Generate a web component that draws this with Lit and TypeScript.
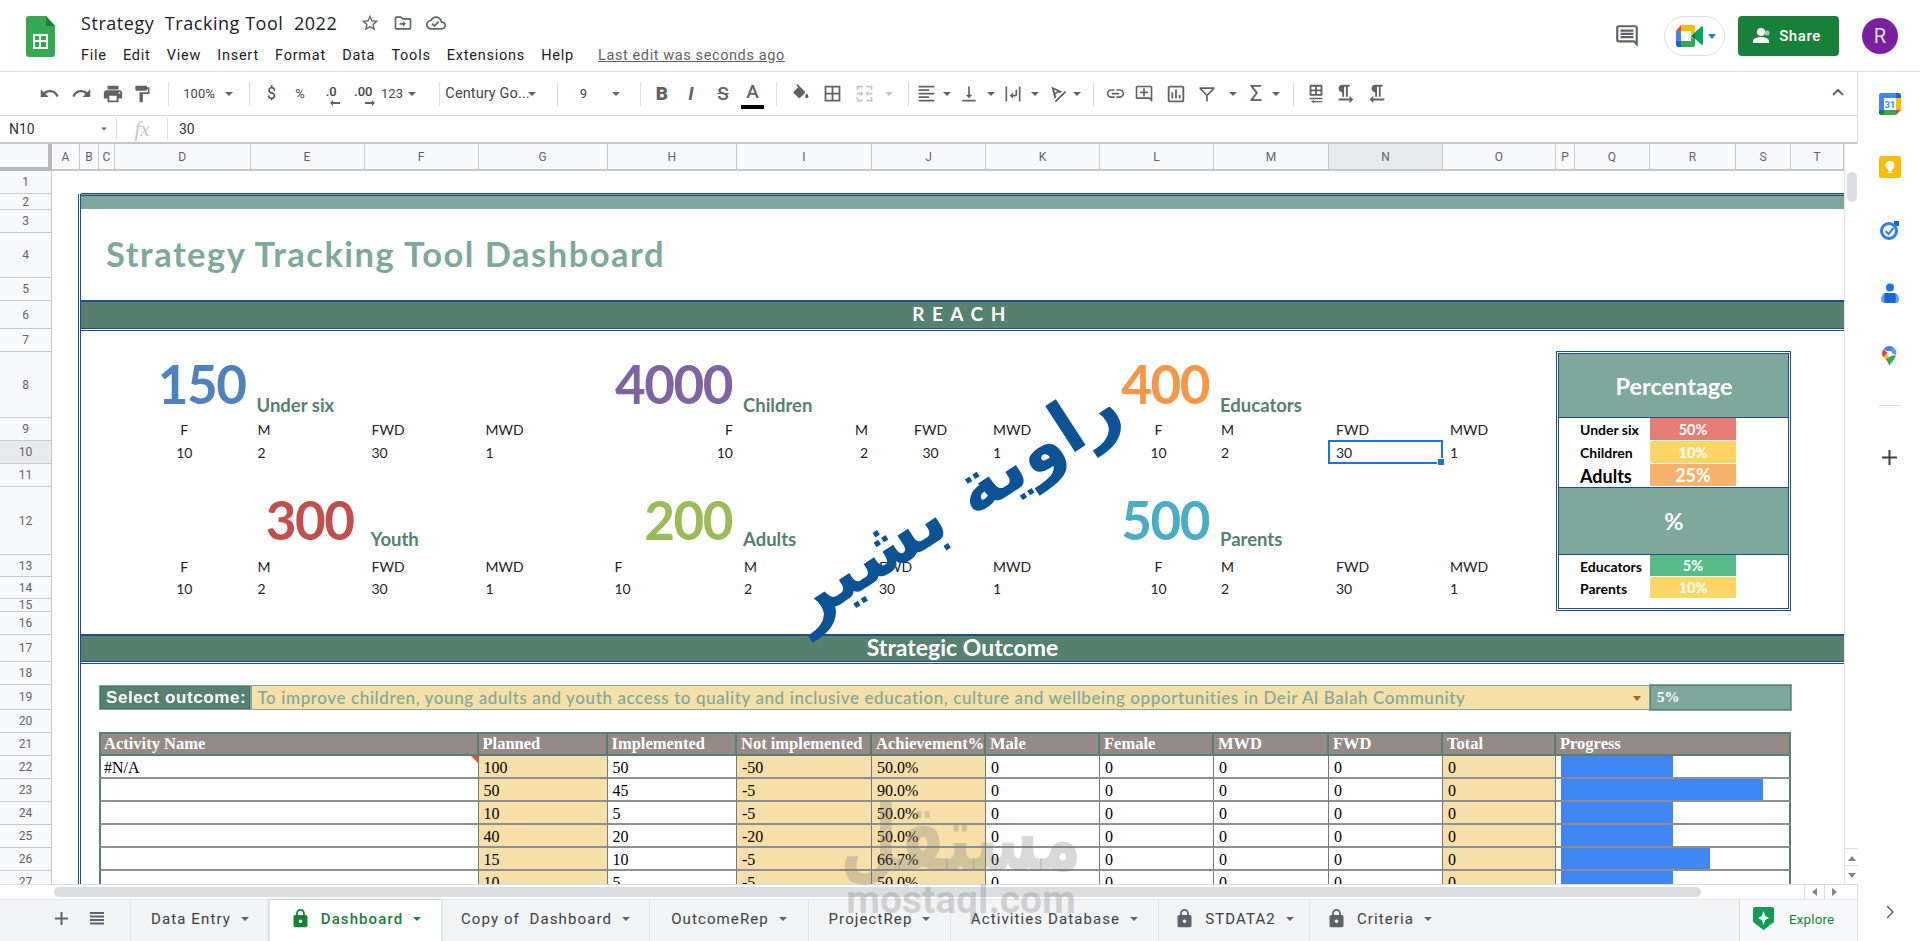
import {LitElement, css, html} from 'lit';
import {customElement} from 'lit/decorators.js';

const COLS = 'ABCDEFGHIJKLMNOPQRST';
const COL_EDGES = [52, 80, 99, 115, 250.5, 364.5, 478.5, 607.5, 737, 872, 986, 1100, 1214, 1329, 1443, 1556, 1575, 1650, 1736, 1791, 1844];
const ROW_HEIGHTS = [23, 16, 23, 45, 23, 28, 23, 66, 23, 23, 23, 68, 22, 22, 13, 23, 27, 23, 25, 23, 23, 23, 23, 23, 23, 23, 23];

const columnTemplate = COL_EDGES.slice(1).map((edge, i) => `${edge - COL_EDGES[i]}px`).join(' ');
const rowTemplate = ROW_HEIGHTS.map((h) => `${h}px`).join(' ');

// grid-area for a cell range, in sheet terms (at('B', 2, 'T'))
function at(col: string, row: number, colEnd = col, rowEnd = row) {
  const c1 = COLS.indexOf(col) + 2;
  const c2 = COLS.indexOf(colEnd) + 3;
  return `grid-area:${row + 1}/${c1}/${rowEnd + 2}/${c2}`;
}

const icon = (d: string, size = 18, cls = '') =>
  html`<svg class="ic ${cls}" width=${size} height=${size} viewBox="0 0 24 24"><path d=${d}></path></svg>`;

const caret = html`<svg class="caret" width="8" height="4" viewBox="0 0 8 4"><path d="M0 0h8L4 4z"></path></svg>`;
const sep = html`<span class="tsep"></span>`;

const P = {
  undo: 'M12.5 8c-2.65 0-5.05.99-6.9 2.6L2 7v9h9l-3.62-3.62c1.39-1.16 3.16-1.88 5.12-1.88 3.54 0 6.55 2.31 7.6 5.5l2.37-.78C21.08 11.03 17.15 8 12.5 8z',
  redo: 'M18.4 10.6C16.55 8.99 14.15 8 11.5 8c-4.65 0-8.58 3.03-9.96 7.22L3.9 16c1.05-3.19 4.05-5.5 7.6-5.5 1.95 0 3.73.72 5.12 1.88L13 16h9V7l-3.6 3.6z',
  print: 'M19 8H5c-1.66 0-3 1.34-3 3v6h4v4h12v-4h4v-6c0-1.66-1.34-3-3-3zm-3 11H8v-5h8v5zm3-7c-.55 0-1-.45-1-1s.45-1 1-1 1 .45 1 1-.45 1-1 1zm-1-9H6v4h12V3z',
  paint: 'M18 4V3c0-.55-.45-1-1-1H5c-.55 0-1 .45-1 1v4c0 .55.45 1 1 1h12c.55 0 1-.45 1-1V6h1v4H9v11c0 .55.45 1 1 1h2c.55 0 1-.45 1-1v-9h8V4h-3z',
  fill: 'M16.56 8.94L7.62 0 6.21 1.41l2.38 2.38-5.15 5.15c-.59.59-.59 1.54 0 2.12l5.5 5.5c.29.29.68.44 1.06.44s.77-.15 1.06-.44l5.5-5.5c.59-.58.59-1.53 0-2.12zM19 11.5s-2 2.17-2 3.5c0 1.1.9 2 2 2s2-.9 2-2c0-1.33-2-3.5-2-3.5z',
  borders: 'M3 3v18h18V3H3zm8 16H5v-6h6v6zm0-8H5V5h6v6zm8 8h-6v-6h6v6zm0-8h-6V5h6v6z',
  merge: 'M3 3h7v2H5v3H3zM14 3h7v5h-2V5h-5zM3 16h2v3h5v2H3zM19 16h2v5h-7v-2h5zM3 11h5v2H3zM16 11h5v2h-5zM8 9l3 3-3 3zM16 9l-3 3 3 3z',
  align: 'M15 15H3v2h12v-2zm0-8H3v2h12V7zM3 13h18v-2H3v2zm0 8h18v-2H3v2zM3 3v2h18V3H3z',
  valign: 'M16 13h-3V3h-2v10H8l4 4 4-4zM4 19v2h16v-2H4z',
  wrap: 'M3 3h2v18H3zM19 3h2v18h-2zM15 7h2v6c0 1.1-.9 2-2 2h-3v2.5L8 14l4-3.500V13h3z',
  rotate: 'M4 3l13 6-3 2-1-1-4 2.600 1 3.400-2 2zM7.300 6.500l1.300 4.100 2.800-1.800zM20.300 8.500L21.800 10 9.500 22 8 20.500z',
  link: 'M3.9 12c0-1.71 1.39-3.1 3.1-3.1h4V7H7c-2.76 0-5 2.24-5 5s2.24 5 5 5h4v-1.9H7c-1.71 0-3.1-1.39-3.1-3.1zM8 13h8v-2H8v2zm9-6h-4v1.9h4c1.71 0 3.1 1.39 3.1 3.1s-1.39 3.1-3.1 3.1h-4V17h4c2.76 0 5-2.24 5-5s-2.24-5-5-5z',
  addComment: 'M22 4c0-1.1-.9-2-2-2H4c-1.1 0-2 .9-2 2v12c0 1.1.9 2 2 2h14l4 4V4zm-2 13.170L18.830 16H4V4h16v13.170zM13 5h-2v4H7v2h4v4h2v-4h4V9h-4z',
  chart: 'M19 3H5c-1.1 0-2 .9-2 2v14c0 1.1.9 2 2 2h14c1.1 0 2-.9 2-2V5c0-1.1-.9-2-2-2zm0 16H5V5h14v14zM7 10h2v7H7zm4-3h2v10h-2zm4 6h2v4h-2z',
  filter: 'M3 4h18v2l-8 8v7h-2v-7L3 6zm2.800 2l6.200 6.200L18.200 6z',
  freeze: 'M5 2h14v12H5zm2 2v3h4V4zm6 0v3h4V4zM7 9v3h4V9zm6 0v3h4V9zM5 16h14v1.600H5zM10 18.500L6.500 20.300 10 22v-1h9v-1.400h-9z',
  ltr: 'M9 10v5h2V4h2v11h2V4h2V2H9C6.790 2 5 3.790 5 6s1.790 4 4 4zm12 8l-4-4v3H5v2h12v3l4-4z',
  rtl: 'M10 10v5h2V4h2v11h2V4h2V2h-8C7.790 2 6 3.790 6 6s1.790 4 4 4zm-2 7v-3l-4 4 4 4v-3h12v-2H8z',
  star: 'M22 9.240l-7.190-.620L12 2 9.190 8.630 2 9.240l5.460 4.730L5.820 21 12 17.270 18.180 21l-1.630-7.030L22 9.240zM12 15.400l-3.760 2.270 1-4.280-3.320-2.880 4.380-.380L12 6.100l1.710 4.040 4.380.380-3.320 2.880 1 4.280L12 15.400z',
  move: 'M20 6h-8l-2-2H4c-1.100 0-2 .9-2 2v12c0 1.100.9 2 2 2h16c1.100 0 2-.9 2-2V8c0-1.100-.9-2-2-2zm0 12H4V6h5.170l2 2H20v10zM12 9.500V12H8v2h4v2.500l3.500-3.500z',
  cloud: 'M19.350 10.040C18.670 6.590 15.640 4 12 4 9.110 4 6.600 5.640 5.350 8.040 2.340 8.360 0 10.910 0 14c0 3.310 2.690 6 6 6h13c2.760 0 5-2.240 5-5 0-2.640-2.050-4.780-4.650-4.960zM19 18H6c-2.210 0-4-1.790-4-4 0-2.050 1.530-3.760 3.560-3.970l1.070-.110.5-.950C8.080 7.140 9.940 6 12 6c2.620 0 4.880 1.860 5.390 4.430l.3 1.500 1.530.110c1.560.1 2.780 1.410 2.780 2.960 0 1.650-1.350 3-3 3zm-9-3.820l-2.090-2.090L6.500 13.500 10 17l6.010-6.010-1.410-1.410z',
  comments: 'M21.990 4c0-1.100-.89-2-1.990-2H4c-1.100 0-2 .9-2 2v12c0 1.100.9 2 2 2h14l4 4-.01-18zM20 4v13.170L18.830 16H4V4h16zM6 12h12v2H6zm0-3h12v2H6zm0-3h12v2H6z',
  lock: 'M18 8h-1V6c0-2.760-2.240-5-5-5S7 3.240 7 6v2H6c-1.100 0-2 .9-2 2v10c0 1.100.9 2 2 2h12c1.100 0 2-.9 2-2V10c0-1.100-.9-2-2-2zm-6 9c-1.100 0-2-.9-2-2s.9-2 2-2 2 .9 2 2-.9 2-2 2zM9 8V6c0-1.660 1.340-3 3-3s3 1.340 3 3v2H9z',
};

// center x of each toolbar item, measured from the page's left edge
const TOOLS: [number, unknown][] = [
  [49, icon(P.undo, 21)],
  [81, icon(P.redo, 21)],
  [113, icon(P.print, 22)],
  [145, icon(P.paint, 20)],
  [164, sep],
  [199, html`<span class="ttxt">100%</span>`],
  [234, caret],
  [248, sep],
  [269, html`<span class="ttxt big">$</span>`],
  [300, html`<span class="ttxt">%</span>`],
  [331, html`<span class="dec">.0<svg width="10" height="6" viewBox="0 0 10 6"><path d="M3 0v2h7v2H3v2L0 3z"></path></svg></span>`],
  [363, html`<span class="dec">.00<svg width="10" height="6" viewBox="0 0 10 6"><path d="M7 0v2H0v2h7v2l3-3z"></path></svg></span>`],
  [396, html`<span class="ttxt">123</span>`],
  [413, caret],
  [427, sep],
  [491, html`<span class="ttxt wide">Century Go...</span>`],
  [541, caret],
  [556, sep],
  [577, html`<span class="ttxt">9</span>`],
  [624, caret],
  [639, sep],
  [659, html`<span class="fmt b">B</span>`],
  [691, html`<span class="fmt i">I</span>`],
  [723, html`<span class="fmt s">S</span>`],
  [755, html`<span class="fmt a">A<span class="abar"></span></span>`],
  [777, sep],
  [798, icon(P.fill, 20)],
  [832, icon(P.borders, 21)],
  [867, icon(P.merge, 21, 'off')],
  [891, html`<svg class="caret off" width="8" height="4" viewBox="0 0 8 4"><path d="M0 0h8L4 4z"></path></svg>`],
  [907, sep],
  [927, icon(P.align, 21)],
  [945, caret],
  [970, icon(P.valign, 20)],
  [989, caret],
  [1015, icon(P.wrap, 20)],
  [1033, caret],
  [1060, icon(P.rotate, 20)],
  [1077, caret],
  [1092, sep],
  [1113, icon(P.link, 21)],
  [1144, icon(P.addComment, 20)],
  [1176, icon(P.chart, 22)],
  [1209, icon(P.filter, 20)],
  [1233, caret],
  [1257, html`<span class="fmt sum">Σ</span>`],
  [1277, caret],
  [1292, sep],
  [1313, icon(P.freeze, 22)],
  [1345, icon(P.ltr, 22)],
  [1377, icon(P.rtl, 22)],
];

const MENU = ['File', 'Edit', 'View', 'Insert', 'Format', 'Data', 'Tools', 'Extensions', 'Help'];

const TABS = [
  {label: 'Data Entry', w: 139},
  {label: 'Dashboard', w: 172, active: true, lock: true},
  {label: 'Copy of  Dashboard', w: 208},
  {label: 'OutcomeRep', w: 159},
  {label: 'ProjectRep', w: 142},
  {label: 'Activities Database', w: 208},
  {label: 'STDATA2', w: 151, lock: true},
  {label: 'Criteria', w: 139, lock: true},
];

const STATS = [
  {num: '150', color: '#4f81bd', label: 'Under six', numCol: 'D', labelCol: 'E', row: 8},
  {num: '4000', color: '#8064a2', label: 'Children', numCol: 'H', labelCol: 'I', row: 8},
  {num: '400', color: '#f79646', label: 'Educators', numCol: 'L', labelCol: 'M', row: 8},
  {num: '300', color: '#c0504d', label: 'Youth', numCol: 'E', labelCol: 'F', row: 12, inset: true},
  {num: '200', color: '#9bbb59', label: 'Adults', numCol: 'H', labelCol: 'I', row: 12},
  {num: '500', color: '#4bacc6', label: 'Parents', numCol: 'L', labelCol: 'M', row: 12},
];

// [column, alignment] for the F / M / FWD / MWD figures of each block
const BLOCKS_TOP = [['D', 'c'], ['E', 'l'], ['F', 'l'], ['G', 'l'], ['H', 'r'], ['I', 'r'], ['J', 'c'], ['K', 'l'], ['L', 'c'], ['M', 'l'], ['N', 'l'], ['O', 'l']];
const BLOCKS_BOTTOM = [['D', 'c'], ['E', 'l'], ['F', 'l'], ['G', 'l'], ['H', 'l'], ['I', 'l'], ['J', 'l'], ['K', 'l'], ['L', 'c'], ['M', 'l'], ['N', 'l'], ['O', 'l']];
const HEADS = ['F', 'M', 'FWD', 'MWD'];
const VALUES = ['10', '2', '30', '1'];

const PCT = [
  {label: 'Under six', value: '50%', color: '#e67c73', row: 9},
  {label: 'Children', value: '10%', color: '#ffd666', row: 10},
  {label: 'Adults', value: '25%', color: '#f6b26b', row: 11, big: true},
  {label: 'Educators', value: '5%', color: '#57bb8a', row: 13},
  {label: 'Parents', value: '10%', color: '#ffd666', row: 14},
];

const TABLE_HEAD: [string, string, string][] = [
  ['Activity Name', 'C', 'F'], ['Planned', 'G', 'G'], ['Implemented', 'H', 'H'], ['Not implemented', 'I', 'I'],
  ['Achievement%', 'J', 'J'], ['Male', 'K', 'K'], ['Female', 'L', 'L'], ['MWD', 'M', 'M'], ['FWD', 'N', 'N'],
  ['Total', 'O', 'O'], ['Progress', 'P', 'S'],
];

const ACTIVITIES = [
  {name: '#N/A', planned: 100, done: 50, gap: -50, pct: 50},
  {name: '', planned: 50, done: 45, gap: -5, pct: 90},
  {name: '', planned: 10, done: 5, gap: -5, pct: 50},
  {name: '', planned: 40, done: 20, gap: -20, pct: 50},
  {name: '', planned: 15, done: 10, gap: -5, pct: 66.7},
  {name: '', planned: 10, done: 5, gap: -5, pct: 50},
];

@customElement('app-root')
export class AppRoot extends LitElement {
  static styles = css`
    :host {
      display: block;
      position: relative;
      width: 1920px;
      height: 941px;
      overflow: hidden;
      background: #fff;
      color: #202124;
      font-family: Roboto, 'Liberation Sans', sans-serif;
      --band: #7ea89b;
      --band-dark: #56806f;
      --navy: #1f4e85;
      --tan: #f6dfa8;
      --cg: Lato, 'Noto Sans', sans-serif;
    }
    svg { display: block; flex: none; }
    .ic path { fill: #5f6368; }
    .ic.off path { fill: #c4c7ca; }
    .caret path { fill: #5f6368; }
    .caret.off path { fill: #c4c7ca; }

    /* title bar */
    .top {
      height: 72px;
      box-sizing: border-box;
      display: flex;
      padding: 16px 0 0 26px;
      border-bottom: 1px solid #dadce0;
    }
    .docs { margin-left: 26px; margin-top: -5px; }
    .title-row { display: flex; align-items: center; height: 24px; }
    .doc-title { font-size: 18px; letter-spacing: .55px; white-space: pre; width: 257px; font-family: 'Open Sans', Roboto, sans-serif; }
    .title-icons { display: flex; gap: 13px; margin-left: 22px; }
    .menu { display: flex; align-items: center; height: 22px; margin-top: 9px; font-size: 14.500px; letter-spacing: .75px; }
    .menu span { margin-right: 16.200px; }
    .menu .last { margin-left: 8px; margin-right: 0; color: #5f6368; text-decoration: underline; letter-spacing: .6px; }
    .top-right { margin-left: auto; display: flex; align-items: flex-start; padding-right: 22px; }
    .comments { margin: 7px 24px 0 0; }
    .meet {
      width: 61px; height: 40px; box-sizing: border-box;
      border: 1px solid #dadce0; border-radius: 20px;
      display: flex; align-items: center; padding-left: 11px; gap: 5px;
    }
    .share {
      margin-left: 13px; width: 101px; height: 40px; padding-right: 3px; box-sizing: border-box;
      background: #188038; color: #fff; border-radius: 4px;
      display: flex; align-items: center; justify-content: center; gap: 6px;
      font-size: 15px; font-weight: 500; letter-spacing: .6px;
    }
    .avatar {
      margin: 2px 0 0 23px; width: 36px; height: 36px; border-radius: 50%;
      background: #7b1fa2; color: #ddd; font-size: 20px;
      display: flex; align-items: center; justify-content: center;
    }

    /* below the title bar */
    .body { display: flex; height: 869px; }
    .main { width: 1857px; display: flex; flex-direction: column; }
    .toolbar { height: 43px; flex: none; display: flex; align-items: center; border-bottom: 1px solid #dadce0; position: relative; }
    .tool { display: flex; justify-content: center; align-items: center; flex: none; height: 100%; color: #5f6368; }
    .tsep { width: 1px; height: 24px; background: #dadce0; }
    .ttxt { font-size: 13px; color: #444; white-space: nowrap; }
    .ttxt.big { font-size: 16px; }
    .ttxt.wide { font-size: 14.500px; letter-spacing: .1px; }
    .dec { position: relative; font-size: 13px; color: #444; margin-top: -4px; font-weight: 500; }
    .dec svg { position: absolute; right: -3px; bottom: -7px; fill: #5f6368; }
    .fmt { font-size: 19px; color: #5f6368; line-height: 20px; position: relative; }
    .fmt.b { font-weight: 900; }
    .fmt.i { font-weight: 700; font-style: italic; }
    .fmt.s { font-weight: 500; text-decoration: line-through; }
    .fmt.a { font-weight: 500; margin-top: -4px; }
    .fmt.sum { font-size: 22px; font-weight: 400; }
    .abar { position: absolute; left: -5px; bottom: -7px; width: 23px; height: 4px; background: #000; }
    .collapse { position: absolute; right: 13px; top: 16px; }

    .fbar { height: 26px; flex: none; display: flex; align-items: center; border-bottom: 2px solid #c4c7c5; font-size: 13px; }
    .cellname { width: 101px; padding-left: 9px; box-sizing: border-box; font-size: 14px; color: #333; }
    .name-caret { width: 6px; }
    .fbar .v { width: 1px; height: 22px; background: #dadce0; margin-left: 9px; }
    .fbar .v.flush { margin-left: 0; }
    .fx { width: 50px; text-align: center; color: #c4c7c5; font-family: 'Liberation Serif', serif; font-style: italic; font-size: 21px; }
    .fval { margin-left: 11px; font-size: 14px; color: #333; }

    .sheet-wrap { display: flex; height: 740px; flex: none; }
    .sheet {
      width: 1844px; height: 740px; overflow: hidden; flex: none;
      display: grid;
      font-family: var(--cg);
      background: #fff;
    }
    .colh, .rowh {
      background: #f8f9fa; color: #5f6368; font: 12px Roboto, sans-serif;
      display: flex; align-items: center; justify-content: center; overflow: hidden;
      box-sizing: border-box;
    }
    .colh { border-right: 1px solid #c8c8c8; border-bottom: 2px solid #c4c7c5; }
    .rowh { border-right: 1px solid #c8c8c8; border-bottom: 1px solid #c8c8c8; }
    .sel { background: #e8eaed; }
    .corner { background: #f8f9fa; box-sizing: border-box; border-right: 4px solid #b8b8b8; border-bottom: 4px solid #b8b8b8; }

    .vline { border-left: 3px double var(--navy); margin-left: -2px; }
    .band { background: var(--band); border-top: 3px double var(--navy); margin: -1px 0 1px 1px; }
    .band.dark {
      background: var(--band-dark); color: #fff;
      border: none;
      box-shadow: 0 -2px 0 var(--navy), 0 1px 0 var(--navy), 0 2px 0 #fff, 0 3px 0 var(--navy);
      margin: 1px 0 1px 1px;
      padding-bottom: 3px; box-sizing: border-box;
      display: flex; align-items: center; justify-content: center;
      font-weight: 700; font-size: 23px;
    }
    .band.reach { letter-spacing: 7.500px; font-size: 19px; }
    .dash-title { font-weight: 700; font-size: 34.500px; letter-spacing: 1.500px; color: var(--band); padding: 0 0 4px 26px; display: flex; align-items: center; white-space: nowrap; z-index: 1; }

    .num { font-weight: 700; font-size: 53px; letter-spacing: -1.500px; text-align: right; padding-right: 5px; align-self: center; line-height: 1; margin-top: -4px; }
    .num.inset { padding-right: 11px; }
    .lab { font-weight: 700; font-size: 18.500px; color: var(--band-dark); align-self: end; padding: 0 0 2px 6px; white-space: nowrap; }
    .lab.up { padding-bottom: 5px; }
    .fig { font-size: 14px; color: #222; display: flex; align-items: center; padding: 0 6px; }
    .fig.c { justify-content: center; padding: 0 0 0 3px; }
    .fig.l { justify-content: flex-start; padding-left: 7px; }
    .fig.r { justify-content: flex-end; padding-right: 4px; }
    .current { border: 2px solid #1a73e8; margin: -1px 0 0 -1px; position: relative; z-index: 2; pointer-events: none; }
    .current i { position: absolute; right: -4px; bottom: -4px; width: 6px; height: 6px; background: #1a73e8; border: 1px solid #fff; }

    .pbox { border: 3px double var(--navy); z-index: 1; margin-top: -1px; margin-bottom: 1px; pointer-events: none; }
    .phead {
      background: var(--band); color: #fff; font-weight: 700; font-size: 23.500px;
      display: flex; align-items: center; justify-content: center; margin-top: 2px;
      margin-right: 2px; margin-left: 3px;
      border-bottom: 1px solid var(--navy);
    }
    .phead.mid { border-top: 1px solid var(--navy); margin-top: 0; }
    .plab { font-weight: 700; font-size: 14px; color: #000; display: flex; align-items: center; padding-left: 5px; white-space: nowrap; }
    .plab.big { font-size: 18px; }
    .pval { color: #fff; font-weight: 700; font-size: 14.500px; display: flex; align-items: center; justify-content: center; border-bottom: 1px solid #fff; }
    .pval.big { font-size: 18px; }

    .sel-label {
      background: var(--band-dark); color: #fff; font: 700 17px 'Liberation Sans', sans-serif; letter-spacing: .6px;
      display: flex; align-items: center; padding-left: 6px;
      border: 1px solid var(--band); box-shadow: inset 0 0 0 1px #4a7264; white-space: nowrap;
    }
    .sel-value {
      background: var(--tan); color: var(--band); font-size: 17px; font-weight: 500; letter-spacing: .6px;
      display: flex; align-items: center; padding-left: 6px; white-space: nowrap;
      border: 1px solid var(--band); position: relative;
    }
    .sel-value svg { position: absolute; right: 8px; top: 10px; }
    .sel-value svg path { fill: #a9640f; }
    .sel-pct {
      background: var(--band); color: #fff; font: 700 15px 'Liberation Serif', serif; display: flex; align-items: center; padding-left: 6px;
      border: 1px solid var(--band-dark); outline: 1px solid var(--band);
    }

    .th {
      background: #968a87; color: #fff; font: 700 16.500px 'Liberation Serif', serif;
      display: flex; align-items: center; padding-left: 4px; white-space: nowrap; box-sizing: border-box;
      border-top: 2px solid var(--band-dark); border-bottom: 2px solid var(--band-dark); border-right: 2px solid var(--band-dark);
      margin-top: -1px;
    }
    .th.first { padding-left: 3px; border-left: 2px solid var(--band-dark); }
    .td {
      font: 16px 'Liberation Serif', serif; color: #000; display: flex; align-items: center; padding: 2px 0 0 5px;
      box-sizing: border-box; border-bottom: 2px solid #8f8f8f; border-right: 1px solid #777; white-space: nowrap; position: relative;
    }
    .td.tan { background: var(--tan); }
    .td.name { padding-left: 3px; border-left: 2px solid var(--band-dark); }
    .td.tri::after {
      content: ''; position: absolute; right: 0; top: 0;
      border-top: 7px solid #d9534f; border-left: 7px solid transparent;
    }
    .prog { padding: 0 0 0 5px; border-right: 2px solid var(--band-dark); align-items: stretch; border-bottom: 2px solid #8f8f8f; box-sizing: border-box; display: flex; }
    .bar { background: #4285f4; }

    .vscroll { width: 13px; border-left: 1px solid #e3e3e3; position: relative; background: #fff; flex: none; }
    .vthumb { position: absolute; top: 28px; left: 2px; width: 10px; height: 30px; border-radius: 5px; background: #dadce0; }
    .vbtn { position: absolute; left: 0; width: 100%; height: 18px; display: flex; align-items: center; justify-content: center; border-top: 1px solid #dadce0; }
    .vbtn.up { bottom: 17px; }
    .vbtn.down { bottom: 0; }
    .vbtn svg path { fill: #80868b; }

    .hscroll { height: 14px; flex: none; display: flex; align-items: center; border-top: 1px solid #dadce0; position: relative; }
    .hthumb { margin-left: 54px; width: 1647px; height: 10px; border-radius: 5px; background: #dadce0; }
    .harrows { position: absolute; right: 13px; top: 0; height: 14px; display: flex; }
    .harrows span { width: 19px; display: flex; align-items: center; justify-content: center; border-left: 1px solid #dadce0; }
    .harrows path { fill: #80868b; }

    .tabs { flex: 1; display: flex; background: #f1f3f4; border-top: 1px solid #e3e3e3; font-size: 15px; letter-spacing: 1.100px; color: #3c4043; align-items: stretch; padding-left: 49px; }
    .tabs-ctl { width: 81px; display: flex; align-items: center; gap: 22px; padding: 0 0 4px 6px; box-sizing: border-box; }
    .tab { flex: none; box-sizing: border-box; display: flex; align-items: center; justify-content: center; gap: 10px; padding-bottom: 4px; border-left: 1px solid #e3e3e3; white-space: pre; }
    .tab.active { background: #fff; color: #188038; font-weight: 500; box-shadow: 0 0 3px rgba(60,64,67,.3); }
    .tab.active .caret path { fill: #188038; }
    .tab.active .ic path { fill: #188038; }
    .explore { margin-left: auto; width: 118px; background: #f8f9fa; border-left: 1px solid #dadce0; display: flex; align-items: center; gap: 15px; padding: 0 0 4px 13px; box-sizing: border-box; color: #188038; font-size: 13.500px; letter-spacing: .1px; }

    .side { width: 63px; flex: none; border-left: 1px solid #dadce0; display: flex; flex-direction: column; align-items: center; }
    .side-ic { height: 63px; flex: none; display: flex; align-items: center; justify-content: center; }
    .side-rule { width: 21px; height: 1px; background: #dadce0; margin-top: 18px; }
    .side-plus { margin-top: 44px; }
    .side-chev { margin-top: auto; margin-bottom: 22px; }
    .cal-num { font: 700 9px Roboto, sans-serif; fill: #4285f4; }

    /* stamps lying over the whole page */
    .stamp { position: absolute; left: 652px; top: 466px; width: 600px; text-align: center; font-family: 'DejaVu Sans', sans-serif; font-weight: 700; font-size: 72px; line-height: 1; color: #0b5394; transform: rotate(-33deg); white-space: nowrap; pointer-events: none; }
    .mostaql { position: absolute; left: 831px; top: 797px; width: 260px; text-align: center; color: rgba(120,120,120,.28); pointer-events: none; }
    .mostaql b { display: block; font: 700 66px/84px 'DejaVu Sans', sans-serif; transform: scaleY(1.400); }
    .mostaql span { display: block; margin-top: 2px; font: 700 39px/34px Roboto, sans-serif; }
  `;

  private renderTools() {
    const edges = TOOLS.map(([c], i) => (i === 0 ? c - 16 : (TOOLS[i - 1][0] + c) / 2));
    return html`<div class="toolbar" style="padding-left:${edges[0]}px">
      ${TOOLS.map(([c, content], i) => {
        const end = i + 1 < edges.length ? edges[i + 1] : c + 16;
        return html`<span class="tool" style="width:${end - edges[i]}px">${content}</span>`;
      })}
      <svg class="collapse" width="12" height="8" viewBox="0 0 12 8"><path d="M1 7l5-5 5 5" fill="none" stroke="#5f6368" stroke-width="2"></path></svg>
    </div>`;
  }

  private renderHeaders() {
    return html`
      <div class="corner" style="grid-area:1/1/2/2"></div>
      ${[...COLS].map((c) => html`<div class="colh ${c === 'N' ? 'sel' : ''}" style=${at(c, 0)}>${c}</div>`)}
      ${ROW_HEIGHTS.map((_, i) => html`<div class="rowh ${i === 9 ? 'sel' : ''}" style="grid-area:${i + 2}/1/${i + 3}/2">${i + 1}</div>`)}
    `;
  }

  private renderReach() {
    const figures = (row: number, blocks: string[][], labels: string[]) =>
      blocks.map(([col, align], i) => html`<div class="fig ${align}" style=${at(col, row)}>${labels[i % 4]}</div>`);
    return html`
      <div class="band" style=${at('B', 2, 'T')}></div>
      <div class="dash-title" style=${at('B', 4, 'K')}>Strategy Tracking Tool Dashboard</div>
      <div class="band dark reach" style=${at('B', 6, 'T')}>REACH</div>
      ${STATS.map((s) => html`
        <div class="num ${s.inset ? 'inset' : ''}" style="${at(s.numCol, s.row)};color:${s.color}">${s.num}</div>
        <div class="lab ${s.row === 12 ? 'up' : ''}" style=${at(s.labelCol, s.row)}>${s.label}</div>
      `)}
      ${figures(9, BLOCKS_TOP, HEADS)}
      ${figures(10, BLOCKS_TOP, VALUES)}
      ${figures(13, BLOCKS_BOTTOM, HEADS)}
      ${figures(14, BLOCKS_BOTTOM, VALUES)}
      <div class="current" style=${at('N', 10)}><i></i></div>
      <div class="phead" style=${at('P', 8, 'S')}>Percentage</div>
      <div class="phead mid" style=${at('P', 12, 'S')}>%</div>
      ${PCT.map((p) => html`
        <div class="plab ${p.big ? 'big' : ''}" style=${at('Q', p.row)}>${p.label}</div>
        <div class="pval ${p.big ? 'big' : ''}" style="${at('R', p.row)};background:${p.color}">${p.value}</div>
      `)}
      <div class="pbox" style=${at('P', 8, 'S', 15)}></div>
    `;
  }

  private renderOutcome() {
    const plain = ['K', 'L', 'M', 'N'];
    return html`
      <div class="band dark" style=${at('B', 17, 'T')}>Strategic Outcome</div>
      <div class="sel-label" style=${at('C', 19, 'D')}>Select outcome:</div>
      <div class="sel-value" style=${at('E', 19, 'Q')}>
        To improve children, young adults and youth access to quality and inclusive education, culture and wellbeing opportunities in Deir Al Balah Community
        <svg width="8" height="5" viewBox="0 0 8 5"><path d="M0 0h8L4 5z"></path></svg>
      </div>
      <div class="sel-pct" style=${at('R', 19, 'S')}>5%</div>
      ${TABLE_HEAD.map(([t, c1, c2]) => html`<div class="th ${c1 === 'C' ? 'first' : ''}" style=${at(c1, 21, c2)}>${t}</div>`)}
      ${ACTIVITIES.map((a, i) => {
        const row = 22 + i;
        return html`
          <div class="td name ${a.name ? 'tri' : ''}" style=${at('C', row, 'F')}>${a.name}</div>
          <div class="td tan" style=${at('G', row)}>${a.planned}</div>
          <div class="td" style=${at('H', row)}>${a.done}</div>
          <div class="td tan" style=${at('I', row)}>${a.gap}</div>
          <div class="td tan" style=${at('J', row)}>${a.pct.toFixed(1)}%</div>
          ${plain.map((c) => html`<div class="td" style=${at(c, row)}>0</div>`)}
          <div class="td tan" style=${at('O', row)}>0</div>
          <div class="prog" style=${at('P', row, 'S')}><div class="bar" style="width:${a.pct * 2.24}px"></div></div>
        `;
      })}
    `;
  }

  private renderSide() {
    return html`<div class="side">
      <div class="side-ic">
        <svg width="22" height="22" viewBox="0 0 22 22">
          <path fill="#fff" d="M5 5h12v12H5z"></path>
          <path fill="#fbbc04" d="M17 5h5v12h-5z"></path>
          <path fill="#34a853" d="M5 17h12v5H5z"></path>
          <path fill="#188038" d="M0 17h5v5H2a2 2 0 0 1-2-2z"></path>
          <path fill="#ea4335" d="M17 17h5l-5 5z"></path>
          <path fill="#4285f4" d="M2 0h15v5H5v12H0V2a2 2 0 0 1 2-2z"></path>
          <path fill="#1967d2" d="M17 0h3a2 2 0 0 1 2 2v3h-5z"></path>
          <text class="cal-num" x="11" y="14.500" text-anchor="middle">31</text>
        </svg>
      </div>
      <div class="side-ic">
        <svg width="22" height="22" viewBox="0 0 22 22">
          <rect width="22" height="22" rx="2" fill="#fbbc04"></rect>
          <circle cx="11" cy="9.500" r="4.500" fill="#fff"></circle>
          <path fill="#fff" d="M9 13h4v2H9zM9 15.500h4V17H9z"></path>
        </svg>
      </div>
      <div class="side-ic">
        <svg width="22" height="22" viewBox="0 0 22 22">
          <circle cx="10" cy="12" r="7.500" fill="none" stroke="#2f7bf0" stroke-width="3"></circle>
          <path d="M6.500 12l3 3 5-6" fill="none" stroke="#2f7bf0" stroke-width="2"></path>
          <path fill="#1a66d6" d="M15 2h5v5h-3l-2-2z"></path>
        </svg>
      </div>
      <div class="side-ic">
        <svg width="18" height="20" viewBox="0 0 18 20">
          <circle cx="9" cy="4.500" r="4" fill="#1a73e8"></circle>
          <path fill="#669df6" d="M0 17c0-4 2-7 4-7h10c2 0 4 3 4 7 0 1.500-1 3-3 3H3c-2 0-3-1.500-3-3z"></path>
          <path fill="#1a66d6" d="M4 10h10c1 2 1 8 0 10H4c-1-2-1-8 0-10z"></path>
        </svg>
      </div>
      <div class="side-ic">
        <svg width="15" height="20" viewBox="0 0 15 20">
          <path fill="#34a853" d="M7.500 20c-1-3-2.500-5-4-7l8-4c1 1 2 1 2.500 0-1 5-5 7-6.500 11z"></path>
          <path fill="#fbbc04" d="M1.500 11L6 8l1 3-3.500 2.500z"></path>
          <path fill="#ea4335" d="M0 7.500c0-1.500.5-3 1.500-4L6 7l-4.500 4C.5 10 0 9 0 7.500z"></path>
          <path fill="#4285f4" d="M1.500 3.500C3 .9 5 0 7.500 0c1.500 0 3 .5 4 1.500L9 7z"></path>
          <path fill="#5a9bf5" d="M11.500 1.500C14 3 15 6.500 14 9l-5-2z"></path>
          <circle cx="7.500" cy="7.500" r="2.700" fill="#fff"></circle>
        </svg>
      </div>
      <div class="side-rule"></div>
      <svg class="side-plus" width="15" height="15" viewBox="0 0 15 15"><path d="M6.500 0h2v6.500H15v2H8.500V15h-2V8.500H0v-2h6.500z" fill="#3c4043"></path></svg>
      <svg class="side-chev" width="8" height="14" viewBox="0 0 8 14"><path d="M1 1l6 6-6 6" fill="none" stroke="#5f6368" stroke-width="1.500"></path></svg>
    </div>`;
  }

  render() {
    return html`
      <header class="top">
        <svg width="29" height="41" viewBox="0 0 29 41">
          <path fill="#34a853" d="M3 0h17l9 10v28a3 3 0 0 1-3 3H3a3 3 0 0 1-3-3V3a3 3 0 0 1 3-3z"></path>
          <path fill="#188038" d="M20 0l9 10h-9z"></path>
          <path fill="#fff" d="M7 18h15v15H7zm2 2v4h4v-4zm6 0v4h5v-4zm-6 6v5h4v-5zm6 0v5h5v-5z"></path>
        </svg>
        <div class="docs">
          <div class="title-row">
            <span class="doc-title">Strategy  Tracking Tool  2022</span>
            <span class="title-icons">
              ${icon(P.star, 20)}${icon(P.move, 20)}${icon(P.cloud, 20)}
            </span>
          </div>
          <div class="menu">
            ${MENU.map((m) => html`<span>${m}</span>`)}
            <span class="last">Last edit was seconds ago</span>
          </div>
        </div>
        <div class="top-right">
          <span class="comments">${icon(P.comments, 26)}</span>
          <span class="meet">
            <svg width="27" height="22" viewBox="0 0 27 22">
              <path fill="#ea4335" d="M5 0L0 6h5z"></path>
              <path fill="#4285f4" d="M0 6h5v10H0z"></path>
              <path fill="#1967d2" d="M0 16h5v6H2a2 2 0 0 1-2-2z"></path>
              <path fill="#fbbc04" d="M5 0h12a2 2 0 0 1 2 2v5l-4 3V6H5z"></path>
              <path fill="#34a853" d="M5 16h10v-4l4 3v5a2 2 0 0 1-2 2H5z"></path>
              <path fill="#188038" d="M15 11l4-4 0 8z"></path>
              <path fill="#00a862" d="M19 7l6-5a1 1 0 0 1 2 1v16a1 1 0 0 1-2 0l-6-5z"></path>
            </svg>
            <svg width="8" height="5" viewBox="0 0 8 5"><path d="M0 0h8L4 5z" fill="#1a73e8"></path></svg>
          </span>
          <span class="share">
            <svg width="20" height="18" viewBox="0 0 20 18">
              <circle cx="8" cy="5" r="4" fill="#fff"></circle>
              <path fill="#fff" d="M0 16v-2c0-2.600 5-4 8-4s8 1.400 8 4v2z"></path>
              <circle cx="14" cy="6" r="2.500" fill="#a8c7b0"></circle>
            </svg>
            Share
          </span>
          <span class="avatar">R</span>
        </div>
      </header>
      <div class="body">
        <div class="main">
          ${this.renderTools()}
          <div class="fbar">
            <span class="cellname">N10</span>
            <svg class="name-caret" width="7" height="4" viewBox="0 0 8 4"><path d="M0 0h8L4 4z" fill="#5f6368"></path></svg>
            <span class="v"></span>
            <span class="fx">fx</span>
            <span class="v flush"></span>
            <span class="fval">30</span>
          </div>
          <div class="sheet-wrap">
            <div class="sheet" style="grid-template-columns:52px ${columnTemplate};grid-template-rows:27px ${rowTemplate}">
              ${this.renderHeaders()}
              ${this.renderReach()}
              ${this.renderOutcome()}
              <div class="vline" style=${at('B', 2, 'B', 27)}></div>
            </div>
            <div class="vscroll">
              <div class="vthumb"></div>
              <div class="vbtn up"><svg width="8" height="5" viewBox="0 0 8 5"><path d="M0 5h8L4 0z"></path></svg></div>
              <div class="vbtn down"><svg width="8" height="5" viewBox="0 0 8 5"><path d="M0 0h8L4 5z"></path></svg></div>
            </div>
          </div>
          <div class="hscroll">
            <div class="hthumb"></div>
            <div class="harrows">
              <span><svg width="5" height="8" viewBox="0 0 5 8"><path d="M5 0v8L0 4z"></path></svg></span>
              <span><svg width="5" height="8" viewBox="0 0 5 8"><path d="M0 0v8l5-4z"></path></svg></span>
            </div>
          </div>
          <div class="tabs">
            <div class="tabs-ctl">
              <svg width="13" height="13" viewBox="0 0 13 13"><path d="M5.500 0h2v5.500H13v2H7.500V13h-2V7.500H0v-2h5.500z" fill="#5f6368"></path></svg>
              <svg width="14" height="13" viewBox="0 0 14 13"><path d="M0 0h14v2H0zM0 3.500h14v2H0zM0 7h14v2H0zM0 10.500h14v2H0z" fill="#5f6368"></path></svg>
            </div>
            ${TABS.map((t) => html`
              <div class="tab ${t.active ? 'active' : ''}" style="width:${t.w}px">
                ${t.lock ? icon(P.lock, 21) : ''}
                <span>${t.label}</span>
                ${caret}
              </div>
            `)}
            <div class="explore">
              <svg width="21" height="23" viewBox="0 0 21 23">
                <path fill="#0f9d58" d="M2 0h17a2 2 0 0 1 2 2v13l-10.500 8L0 15V2a2 2 0 0 1 2-2z"></path>
                <path fill="#fff" d="M10.500 4l1.800 5 3.700 2-3.700 2-1.800 5-1.800-5-3.700-2 3.700-2z"></path>
              </svg>
              Explore
            </div>
          </div>
        </div>
        ${this.renderSide()}
      </div>
      <div class="stamp">راوية بشير</div>
      <div class="mostaql"><b>مستقل</b><span>mostaql.com</span></div>
    `;
  }
}
